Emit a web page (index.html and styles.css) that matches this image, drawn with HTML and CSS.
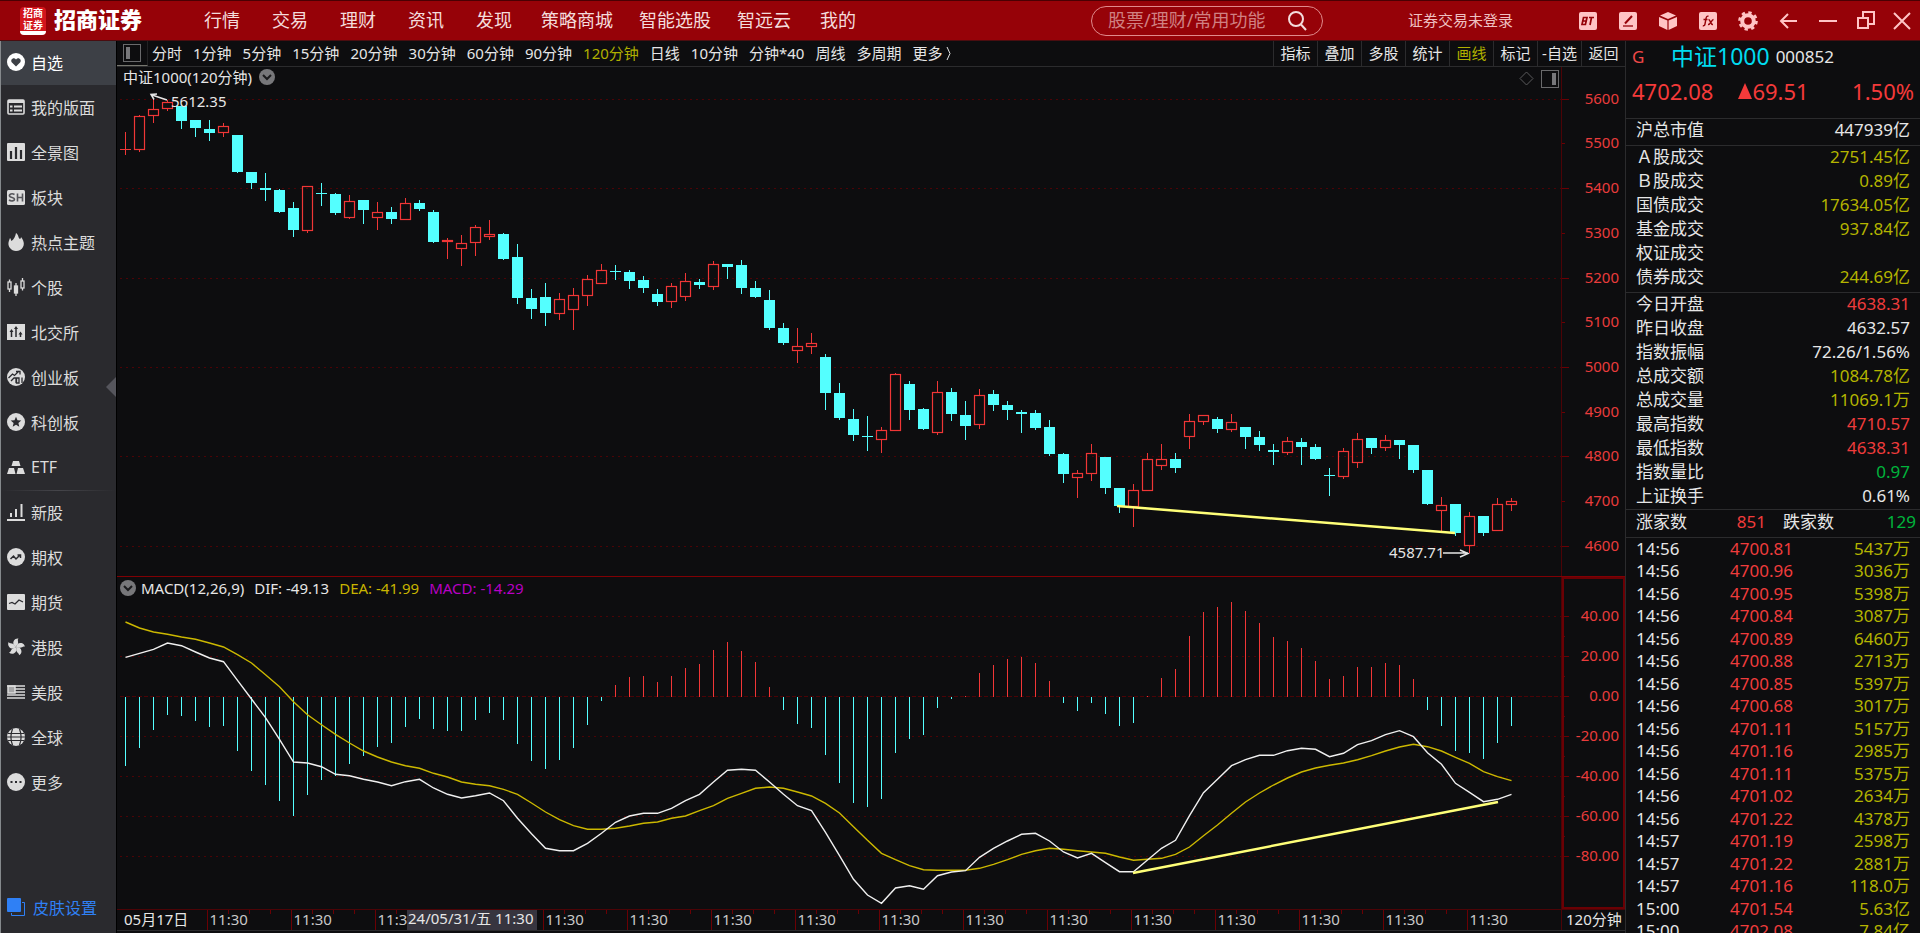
FILE: index.html
```html
<!DOCTYPE html>
<html lang="zh-CN">
<head>
<meta charset="utf-8">
<meta name="viewport" content="width=device-width, initial-scale=1">
<title>招商证券 - 中证1000</title>
<link rel="stylesheet" href="styles.css">
</head>
<body>
<div class="app">
  <header class="titlebar">
    <div class="brand">
      <span class="brand-mark"><span>招商</span><span>证券</span><i class="brand-foot"></i></span>
      <span class="brand-name">招商证券</span>
    </div>
    <nav class="nav">
      <a class="nav-link" href="#">行情</a>
      <a class="nav-link" href="#">交易</a>
      <a class="nav-link" href="#">理财</a>
      <a class="nav-link" href="#">资讯</a>
      <a class="nav-link" href="#">发现</a>
      <a class="nav-link nav-link--wide" href="#">策略商城</a>
      <a class="nav-link nav-link--wide" href="#">智能选股</a>
      <a class="nav-link nav-link--wide" href="#">智远云</a>
      <a class="nav-link" href="#">我的</a>
    </nav>
    <form class="search">
      <input class="search-input" type="text" aria-label="搜索" placeholder="股票/理财/常用功能">
      <button class="search-button" type="button" aria-label="搜索">
        <svg width="22" height="22" viewBox="0 0 22 22" fill="none" stroke="currentColor" stroke-width="2"><circle cx="10" cy="9" r="7"/><path d="M15 14.500l5 5.500"/></svg>
      </button>
    </form>
    <a class="login" href="#">证券交易未登录</a>
    <div class="tools">
      <button class="tool" type="button" aria-label="BT"><svg width="18" height="18" viewBox="0 0 18 18"><rect width="18" height="18" rx="2" fill="currentColor"/><path d="M4.500 5.500h3.500l-.8 3.500-.8 3.500H3zM3.800 9h3.400M10 5.500h5M12.500 5.500L11 13" fill="none" stroke="#960208" stroke-width="1.700"/></svg></button>
      <button class="tool" type="button" aria-label="编辑"><svg width="18" height="18" viewBox="0 0 18 18"><rect width="18" height="18" rx="2" fill="currentColor"/><path d="M4 14h10" stroke="#960208" stroke-width="1.300"/><path d="M6 11.500L13 4" stroke="#960208" stroke-width="2"/></svg></button>
      <button class="tool" type="button" aria-label="产品"><svg width="20" height="20" viewBox="0 0 20 20" fill="currentColor"><path d="M10 1l8 3.500-8 3.500-8-3.500zM1 6l8.400 3.500V19L1 15zM19 6l-8.400 3.500V19L19 15z"/></svg></button>
      <button class="tool" type="button" aria-label="公式"><svg width="18" height="18" viewBox="0 0 18 18"><rect width="18" height="18" rx="2" fill="currentColor"/><path d="M9.500 4.200C7.800 3.800 7.300 5 7 6.500L6 12c-.3 1.500-1 2-2.200 1.700M4.500 7.500h4M9.500 7.500c2 0 2 5.500 4.500 5M14.500 7.500c-2 0-3 5.500-5.500 5" fill="none" stroke="#960208" stroke-width="1.400"/></svg></button>
      <button class="tool" type="button" aria-label="设置"><svg width="20" height="20" viewBox="0 0 20 20" fill="none" stroke="currentColor"><circle cx="10" cy="10" r="5.800" stroke-width="4"/><circle cx="10" cy="10" r="8.500" stroke-width="2.600" stroke-dasharray="3.340 3.340"/></svg></button>
      <button class="tool" type="button" aria-label="后退"><svg width="18" height="18" viewBox="0 0 18 18" fill="none" stroke="currentColor" stroke-width="2"><path d="M18 9H2M9 2L2 9l7 7"/></svg></button>
      <button class="tool" type="button" aria-label="最小化"><svg width="18" height="18" viewBox="0 0 18 18" fill="none" stroke="currentColor" stroke-width="2"><path d="M0 9h18"/></svg></button>
      <button class="tool tool--narrow" type="button" aria-label="还原"><svg width="18" height="20" viewBox="0 0 18 20" fill="none" stroke="currentColor" stroke-width="2"><path d="M1 7h10v10H1zM6 7V1h11v12h-6"/></svg></button>
      <button class="tool tool--narrow" type="button" aria-label="关闭"><svg width="18" height="18" viewBox="0 0 18 18" fill="none" stroke="currentColor" stroke-width="2"><path d="M1 1l16 16M17 1L1 17"/></svg></button>
    </div>
  </header>

  <div class="workspace">
    <aside class="sidebar">
      <nav class="side-nav">
        <a class="side-link side-link--active" href="#"><svg class="side-icon" viewBox="0 0 18 18"><circle cx="9" cy="9" r="9" fill="currentColor"/><path d="M9 13.500L4.700 9.200C3 7 6.500 3.500 9 6.500c2.500-3 6 .5 4.300 2.700z" fill="#3d4046"/></svg>自选</a>
        <a class="side-link" href="#"><svg class="side-icon" viewBox="0 0 18 18"><rect x="1" y="2" width="16" height="14" rx="1" fill="none" stroke="currentColor" stroke-width="1.600"/><path d="M1 3.500h16" stroke="currentColor" stroke-width="3"/><path d="M3 8.500h2.500M7 8.500h8M3 12.500h2.500M7 12.500h8" stroke="currentColor" stroke-width="2"/></svg>我的版面</a>
        <a class="side-link" href="#"><svg class="side-icon" viewBox="0 0 18 18"><rect width="18" height="18" rx="1" fill="currentColor"/><path d="M4 16V8M9 16V4M14 16V7" stroke="#2a2a2e" stroke-width="2.200"/></svg>全景图</a>
        <a class="side-link" href="#"><svg class="side-icon" viewBox="0 0 18 18"><rect y="2" width="18" height="15" rx="1.500" fill="currentColor"/><path d="M7.500 6.500C5 5 2 6 2.500 8s5 1.200 5 3.200-3.500 2.300-5.500.8M10.500 5.500v8M15.500 5.500v8M10.500 9.500h5" fill="none" stroke="#55555a" stroke-width="1.600"/></svg>板块</a>
        <a class="side-link" href="#"><svg class="side-icon" viewBox="0 0 18 18"><path d="M9 0c3 2 2 5 4 6 1-.5 1-2 1-2 3 4 3.500 7 2 10-2 4.500-10 5.500-13 1C0 11 2 8 3 5c1 1 .8 2 1.500 3C7 6.500 8.500 3 9 0z" fill="currentColor"/></svg>热点主题</a>
        <a class="side-link" href="#"><svg class="side-icon" viewBox="0 0 18 18" fill="none" stroke="currentColor" stroke-width="1.300"><rect x="1" y="4" width="3" height="7"/><path d="M2.500 1.500V4M2.500 11v3M9 5v13"/><rect x="7.500" y="8" width="3" height="7" fill="currentColor"/><rect x="14" y="3" width="3" height="7"/><path d="M15.500 0v3M15.500 10v2.500"/></svg>个股</a>
        <a class="side-link" href="#"><svg class="side-icon" viewBox="0 0 18 18"><rect y="1" width="18" height="16" fill="currentColor"/><path d="M4.500 14V8M9 14V5M13.500 14v-4" stroke="#2a2a2e" stroke-width="1.500"/><path d="M2.500 9l2-3 2 3zM7 6l2-3 2 3zM11.500 11.500l2-3 2 3z" fill="#2a2a2e"/></svg>北交所</a>
        <a class="side-link" href="#"><svg class="side-icon" viewBox="0 0 18 18"><circle cx="9" cy="9" r="9" fill="currentColor"/><path d="M1.500 10l4-4 2 1.500L12 3M9 3.500h4v3M4 13l3-3h2v5M11 10h-1.500v5H12v-5zM15 9.500V15" fill="none" stroke="#2a2a2e" stroke-width="1.300"/></svg>创业板</a>
        <a class="side-link" href="#"><svg class="side-icon" viewBox="0 0 18 18"><circle cx="9" cy="9" r="9" fill="currentColor"/><path d="M9 3.800l1.500 3.500 3.800.3-2.900 2.400.9 3.700L9 11.700l-3.300 2 .9-3.700-2.900-2.400 3.800-.3z" fill="#2a2a2e"/></svg>科创板</a>
        <a class="side-link" href="#"><svg class="side-icon" viewBox="0 0 18 18" fill="currentColor"><path d="M6 3h6l1.500 5h-9zM2 10h5l1.500 6H0zM11 10h5l2 6H9.500z"/></svg>ETF</a>
        <a class="side-link side-link--ruled" href="#"><svg class="side-icon" viewBox="0 0 18 18" stroke="currentColor" stroke-width="2"><path d="M0 17h18M4 14v-4M9 14V6M14.500 14V1"/></svg>新股</a>
        <a class="side-link" href="#"><svg class="side-icon" viewBox="0 0 18 18"><circle cx="9" cy="9" r="9" fill="currentColor"/><path d="M3.500 11l3-3 2.500 3 4-4M10.500 7H13.500v3" fill="none" stroke="#2a2a2e" stroke-width="1.500"/></svg>期权</a>
        <a class="side-link" href="#"><svg class="side-icon" viewBox="0 0 18 18"><rect y="1" width="18" height="16" rx="1" fill="currentColor"/><path d="M2 10.500l3-1 3 1.500 4-4 4 2" fill="none" stroke="#2a2a2e" stroke-width="1.300"/></svg>期货</a>
        <a class="side-link" href="#"><svg class="side-icon" viewBox="0 0 18 18" fill="currentColor"><path id="petal" d="M9 9C6.500 7.500 5.500 5 7 2.500 7.800 1 9.500.2 11.500.5 10 1.800 11.500 3.500 11 5.500 10.600 7 9.200 7.300 9 9z"/><use href="#petal" transform="rotate(72 9 9)"/><use href="#petal" transform="rotate(144 9 9)"/><use href="#petal" transform="rotate(216 9 9)"/><use href="#petal" transform="rotate(288 9 9)"/></svg>港股</a>
        <a class="side-link" href="#"><svg class="side-icon" viewBox="0 0 18 18" stroke="currentColor" stroke-width="1.500"><path d="M0 3h18M8 6h10M8 9h10M0 12h18M0 15h18"/><rect x="1" y="3" width="7" height="7" fill="currentColor" fill-opacity=".7"/></svg>美股</a>
        <a class="side-link" href="#"><svg class="side-icon" viewBox="0 0 18 18"><circle cx="9" cy="9" r="9" fill="currentColor"/><path d="M5.500 1c-2 5-2 11 0 16M12.500 1c2 5 2 11 0 16M1 5.500h16M0 9h18M1 12.500h16" fill="none" stroke="#2a2a2e" stroke-width="1.200"/></svg>全球</a>
        <a class="side-link" href="#"><svg class="side-icon" viewBox="0 0 18 18"><circle cx="9" cy="9" r="9" fill="currentColor"/><path d="M3.500 8h2v2h-2zM8 8h2v2H8zM12.500 8h2v2h-2z" fill="#2a2a2e"/></svg>更多</a>
      </nav>
      <a class="skin-link" href="#"><svg class="side-icon" viewBox="0 0 18 18"><rect width="14" height="14" rx="1" fill="currentColor"/><path d="M15 4.500h2.500v13h-13V15" fill="none" stroke="currentColor"/></svg>皮肤设置</a>
      <button class="collapse" type="button" aria-label="收起"></button>
    </aside>

    <main class="main">
      <div class="toolbar">
        <button class="pane-toggle" type="button" aria-label="左侧栏"><i class="pane-box"></i></button>
        <div class="periods">
          <button type="button">分时</button><button type="button">1分钟</button><button type="button">5分钟</button><button type="button">15分钟</button><button type="button">20分钟</button><button type="button">30分钟</button><button type="button">60分钟</button><button type="button">90分钟</button><button class="is-on" type="button">120分钟</button><button type="button">日线</button><button type="button">10分钟</button><button type="button">分钟*40</button><button type="button">周线</button><button type="button">多周期</button><button type="button">更多<svg class="more-mark" width="12" height="15" viewBox="0 0 12 15" fill="none" stroke="currentColor"><path d="M5 1l3 6.500L5 14"/></svg></button>
        </div>
        <div class="actions">
          <button type="button">指标</button><button type="button">叠加</button><button type="button">多股</button><button type="button">统计</button><button class="is-on" type="button">画线</button><button type="button">标记</button><button type="button">-自选</button><button type="button">返回</button>
        </div>
      </div>
      <div class="chart">
        <svg id="plot" class="plot" viewBox="117 67 1508 866" role="img" aria-label="中证1000 120分钟 K线与MACD"></svg>
        <div class="legend legend--price">
          <span>中证1000(120分钟)</span>
          <button class="drop" type="button" aria-label="展开"><svg width="16" height="16" viewBox="0 0 16 16"><circle cx="8" cy="8" r="8" fill="#77777a"/><path d="M4 6l4 4 4-4" fill="none" stroke="#1a1a1c" stroke-width="2"/></svg></button>
        </div>
        <div class="legend legend--macd">
          <button class="drop" type="button" aria-label="展开"><svg width="16" height="16" viewBox="0 0 16 16"><circle cx="8" cy="8" r="8" fill="#77777a"/><path d="M4 6l4 4 4-4" fill="none" stroke="#1a1a1c" stroke-width="2"/></svg></button>
          <div class="legend-values"><span>MACD(12,26,9)</span><span>DIF: -49.13</span><span class="dea">DEA: -41.99</span><span class="macd">MACD: -14.29</span></div>
        </div>
      </div>
    </main>

    <section class="quote">
      <div class="quote-head">
        <div class="quote-title"><span class="flag">G</span><h1 class="quote-name">中证1000</h1><span class="quote-code">000852</span></div>
        <div class="quote-price"><span>4702.08</span><span class="delta"><svg width="14" height="18" viewBox="0 0 14 18"><path d="M7 1l7 16H0z" fill="currentColor"/></svg>69.51</span><span class="percent">1.50%</span></div>
      </div>
      <dl class="stats stats--cap"><dt>沪总市值</dt><dd>447939亿</dd></dl>
      <dl class="stats stats--turnover">
        <dt>Ａ股成交</dt><dd class="amount">2751.45亿</dd>
        <dt>Ｂ股成交</dt><dd class="amount">0.89亿</dd>
        <dt>国债成交</dt><dd class="amount">17634.05亿</dd>
        <dt>基金成交</dt><dd class="amount">937.84亿</dd>
        <dt>权证成交</dt><dd></dd>
        <dt>债券成交</dt><dd class="amount">244.69亿</dd>
      </dl>
      <dl class="stats">
        <dt>今日开盘</dt><dd class="up">4638.31</dd>
        <dt>昨日收盘</dt><dd>4632.57</dd>
        <dt>指数振幅</dt><dd>72.26/1.56%</dd>
        <dt>总成交额</dt><dd class="amount">1084.78亿</dd>
        <dt>总成交量</dt><dd class="amount">11069.1万</dd>
        <dt>最高指数</dt><dd class="up">4710.57</dd>
        <dt>最低指数</dt><dd class="up">4638.31</dd>
        <dt>指数量比</dt><dd class="down">0.97</dd>
        <dt>上证换手</dt><dd>0.61%</dd>
      </dl>
      <div class="breadth"><span>涨家数</span><span class="rise up">851</span><span class="fall-label">跌家数</span><span class="fall down">129</span></div>
      <table class="ticks">
        <tbody>
          <tr><td>14:56</td><td>4700.81</td><td>5437万</td></tr>
          <tr><td>14:56</td><td>4700.96</td><td>3036万</td></tr>
          <tr><td>14:56</td><td>4700.95</td><td>5398万</td></tr>
          <tr><td>14:56</td><td>4700.84</td><td>3087万</td></tr>
          <tr><td>14:56</td><td>4700.89</td><td>6460万</td></tr>
          <tr><td>14:56</td><td>4700.88</td><td>2713万</td></tr>
          <tr><td>14:56</td><td>4700.85</td><td>5397万</td></tr>
          <tr><td>14:56</td><td>4700.68</td><td>3017万</td></tr>
          <tr><td>14:56</td><td>4701.11</td><td>5157万</td></tr>
          <tr><td>14:56</td><td>4701.16</td><td>2985万</td></tr>
          <tr><td>14:56</td><td>4701.11</td><td>5375万</td></tr>
          <tr><td>14:56</td><td>4701.02</td><td>2634万</td></tr>
          <tr><td>14:56</td><td>4701.22</td><td>4378万</td></tr>
          <tr><td>14:57</td><td>4701.19</td><td>2598万</td></tr>
          <tr><td>14:57</td><td>4701.22</td><td>2881万</td></tr>
          <tr><td>14:57</td><td>4701.16</td><td>118.0万</td></tr>
          <tr><td>15:00</td><td>4701.54</td><td>5.63亿</td></tr>
          <tr><td>15:00</td><td>4702.08</td><td>7.84亿</td></tr>
        </tbody>
      </table>
    </section>
  </div>
</div>
<script src="chart.js"></script>
</body>
</html>
```

FILE: styles.css
```css
* { box-sizing: border-box; }

body {
  margin: 0;
  background: #0d0d0f;
  color: #e6e6e6;
  font-family: "Noto Sans", "Noto Sans CJK SC", sans-serif;
  font-size: 15px;
}

a { color: inherit; text-decoration: none; }

button {
  padding: 0;
  border: 0;
  background: none;
  color: inherit;
  font: inherit;
  cursor: pointer;
}

.app {
  display: flex;
  flex-direction: column;
  height: 100vh;
  overflow: hidden;
}

/* Title bar */
.titlebar {
  display: flex;
  flex: none;
  align-items: center;
  height: 41px;
  border-top: 1px solid #4a0003;
  border-bottom: 1px solid #4a0d10;
  background: #960208;
  color: #f4dcdc;
}

.brand {
  display: flex;
  align-items: center;
  gap: 8px;
  width: 188px;
  padding-left: 20px;
}

.brand-mark {
  display: flex;
  flex-direction: column;
  align-items: center;
  width: 26px;
  border-radius: 4px;
  background: #d3151c;
  color: #fff;
  font-size: 10px;
  font-weight: 700;
  line-height: 12px;
}

.brand-foot {
  width: 26px;
  height: 4px;
  border-radius: 0 0 4px 4px;
  background: #fff;
}

.brand-name {
  padding-bottom: 4px;
  color: #fff;
  font-size: 22px;
  font-weight: 900;
  line-height: 30px;
}

.nav { display: flex; flex: none; }
.nav-link { padding: 0 16px 2px; font-size: 18px; line-height: 36px; }
.nav-link--wide { padding: 0 13px 2px; }

.search {
  display: flex;
  align-items: center;
  width: 232px;
  height: 30px;
  margin: 0 85px 0 auto;
  border: 1px solid #e08a8c;
  border-radius: 15px;
}

.search-input {
  flex: 1;
  min-width: 0;
  padding: 0 0 2px 16px;
  border: 0;
  outline: 0;
  background: none;
  color: #d78f91;
  font: inherit;
  font-size: 18px;
}

.search-input::placeholder { color: #d08082; opacity: 1; }
.search-button { display: flex; width: 36px; }
.login { margin-right: 55px; padding-bottom: 2px; color: #eec0c1; }
.tools { display: flex; color: #ffc4c5; }
.tool { display: flex; align-items: center; justify-content: center; width: 40px; height: 38px; }
.tool--narrow { width: 36px; }

.workspace { display: flex; flex: 1; min-height: 0; }

/* Side navigation */
.sidebar {
  position: relative;
  display: flex;
  flex: none;
  flex-direction: column;
  justify-content: space-between;
  width: 117px;
  border-right: 1px solid #000;
  border-left: 1px solid #85898c;
  background: #2a2a2e;
  font-size: 16px;
}

.side-link, .skin-link {
  display: flex;
  align-items: center;
  gap: 6px;
  height: 45px;
  padding: 0 0 2px 6px;
  color: #dcdcdc;
  white-space: nowrap;
}

.side-link--active { height: 44px; background: #3d4046; color: #fff; }

.side-link--ruled {
  background: linear-gradient(90deg, transparent, #45454a, transparent) top / 100% 1px no-repeat;
}

.side-icon { flex: none; width: 18px; height: 18px; }
.skin-link { gap: 8px; height: 50px; color: #2f80f5; }

.collapse {
  position: absolute;
  top: 336px;
  right: 0;
  width: 10px;
  height: 20px;
  background: #55555c;
  clip-path: polygon(100% 0, 100% 100%, 0 50%);
}

/* Chart column */
.main { display: flex; flex: 1; flex-direction: column; min-width: 0; }

.toolbar {
  display: flex;
  flex: none;
  height: 26px;
  border-bottom: 1px solid #2b2b2d;
  white-space: nowrap;
}

.pane-toggle {
  display: flex;
  align-items: center;
  justify-content: center;
  width: 31px;
  border-right: 1px solid #222224;
  border-bottom: 1px solid #77776f;
}

.pane-box {
  width: 18px;
  height: 18px;
  border: 1px solid #6a6a6c;
  background: linear-gradient(#77777a, #77777a) 2px 2px / 4px 12px no-repeat;
}

.periods { display: flex; gap: 11px; padding: 0 0 2px 4px; }
.more-mark { vertical-align: -2px; }
.actions { display: flex; margin-left: auto; }
.actions button { width: 44px; padding-bottom: 2px; border-left: 1px solid #2b2b2d; }
.is-on { color: #b0b000; }

.chart { position: relative; }
.plot { display: block; width: 100%; height: auto; }
.plot text { font-size: 15px; fill: #e6e6e6; }
.plot .scale { fill: #e93c3c; text-anchor: end; }
.plot .clock { fill: #c8c8c8; }

.legend {
  position: absolute;
  display: flex;
  align-items: center;
  line-height: 20px;
}

.legend--price { top: 0; left: 6px; gap: 7px; }
.legend--macd { top: 59%; left: 3px; gap: 5px; }
.legend-values { display: flex; gap: 10px; }
.drop { display: flex; }
.legend .dea { color: #c8b400; }
.legend .macd { color: #b800c4; }

/* Quote panel */
.quote {
  flex: none;
  width: 295px;
  overflow: hidden;
  border-left: 1px solid #2b2b2d;
  font-size: 17px;
}

.quote-head { height: 77px; padding: 0 6px; }
.quote-title { display: flex; align-items: center; height: 30px; }
.flag { width: 39px; color: #f04848; }
.quote-name { margin: 0 6px 0 0; color: #00dcf0; font-size: 23px; font-weight: 400; line-height: 28px; }
.quote-price { display: flex; align-items: center; height: 40px; color: #f43a3a; font-size: 22px; }
.delta { display: flex; align-items: center; margin-left: 25px; }
.percent { margin-left: auto; }

.stats {
  display: grid;
  grid-template-columns: auto 1fr;
  grid-auto-rows: 24px;
  margin: 0;
  padding: 0 10px;
  border-top: 1px solid #2b2b2d;
  line-height: 22px;
}

.stats dd { margin: 0; text-align: right; }
.stats--cap { padding-bottom: 2px; }
.stats--turnover { padding-bottom: 2px; }
.up { color: #f03c3c; }
.down { color: #00b43c; }
.amount { color: #b4b400; }

.breadth {
  display: flex;
  height: 29px;
  padding: 0 4px 0 10px;
  border-top: 1px solid #2b2b2d;
  border-bottom: 1px solid #2b2b2d;
  line-height: 24px;
}

.rise { width: 79px; text-align: right; }
.fall-label { padding-left: 17px; }
.fall { margin-left: auto; }

.ticks {
  width: 100%;
  border-collapse: collapse;
  table-layout: fixed;
  line-height: 22px;
}

.ticks tr { height: 22px; }
.ticks tr:nth-child(even) { height: 23px; }
.ticks td { padding: 0; text-align: right; vertical-align: top; }
.ticks td:first-child { width: 64px; padding-left: 10px; text-align: left; }
.ticks td:nth-child(2) { width: 103px; color: #f03c3c; }
.ticks td:last-child { padding-right: 10px; color: #b4b400; }
```

FILE: chart.js
```js
// Candles: high, body top, body bottom, low (plot units); r = rising, c = falling.
const candles = `
132 149 149 155 r|115 116 150 152 r|98 109 116 123 r|100 102 109 111 r|106 106 121 129 c
120 120 128 137 c|120 129 133 141 c|123 126 133 137 r|135 135 172 173 c|172 172 183 189 c
173 188 190 201 c|189 190 212 213 c|202 208 230 237 c|186 186 231 233 r|183 193 194 206 c
193 194 213 215 c|195 201 218 219 r|200 200 210 224 c|202 212 218 230 r|207 212 219 224 c
198 203 220 220 r|200 203 209 211 c|210 212 242 243 c|238 240 242 259 r|235 243 249 266 r
225 227 243 256 r|220 234 237 240 r|233 234 259 260 c|244 257 298 304 c|289 298 309 319 c
283 297 313 326 c|293 299 314 320 r|288 295 310 330 r|275 279 296 306 r|264 270 284 284 r
265 271 272 280 c|270 272 281 289 c|276 280 288 293 c|289 294 302 306 c|283 286 302 308 r
273 281 297 301 r|279 282 285 289 c|261 264 287 290 r|264 264 267 279 c|260 265 288 294 c
281 288 297 298 c|290 300 328 330 c|323 328 343 345 c|328 346 351 363 r|333 343 347 354 r
354 357 393 410 c|383 393 418 420 c|409 419 435 441 c|416 436 437 451 c|427 430 440 453 r
373 374 431 431 r|381 384 410 420 c|408 409 429 430 c|381 392 433 435 r|388 392 414 421 c
401 415 426 440 c|389 395 425 429 r|390 394 405 411 c|401 405 410 420 c|410 412 414 433 c
410 413 428 430 c|420 427 454 456 c|453 454 474 483 c|470 473 478 498 r|444 453 474 481 r
457 457 488 494 c|488 488 506 513 c|484 490 507 527 r|453 459 491 491 r|444 459 466 470 r
453 459 468 473 c|414 421 437 449 r|415 415 422 425 r|417 419 429 433 c|414 422 430 432 r
427 427 437 449 c|431 437 445 451 c|444 450 452 465 c|437 441 453 455 r|438 442 447 465 c
444 447 459 460 c|468 475 476 496 c|448 451 477 479 r|433 439 463 468 r|438 438 448 454 c
435 440 448 451 r|440 440 445 459 c|445 445 470 473 c|470 470 504 505 c|497 505 511 532 r
504 504 533 536 c|512 516 546 553 r|516 516 533 536 c|498 504 531 531 r|498 501 505 511 r
`.trim().split(/[|\n]/).map(s => s.trim().split(' '));

// Histogram heights above (+) or below (-) the zero line.
const histogram = [
  -69, -51, -33, -18, -19, -24, -30, -29, -54, -74, -88, -104, -119, -98, -83, -79, -67, -59, -50, -46,
  -30, -22, -32, -34, -34, -23, -16, -23, -47, -64, -72, -63, -51, -28, -4, 12, 20, 21, 15, 21,
  29, 33, 47, 55, 46, 35, 10, -13, -27, -31, -58, -86, -106, -110, -102, -56, -42, -38, -11, -2,
  1, 24, 32, 38, 40, 34, 16, -6, -14, -6, -17, -29, -26, 1, 19, 28, 61, 85, 90, 95,
  86, 74, 60, 56, 49, 36, 18, 21, 30, 30, 34, 32, 18, -13, -29, -54, -56, -62, -46, -29
];

// Indicator lines, in thirds of a plot unit below the top of the MACD area.
const dif = [
  262, 250, 238, 219, 227, 246, 264, 275, 331, 387, 443, 508, 576, 579, 590, 613, 617, 628, 636, 647,
  635, 628, 654, 673, 684, 677, 669, 692, 745, 791, 835, 842, 842, 820, 790, 757, 738, 730, 730, 715,
  692, 673, 636, 601, 598, 601, 636, 673, 707, 722, 787, 857, 928, 975, 1000, 954, 947, 958, 917, 906,
  902, 862, 835, 813, 793, 790, 813, 846, 864, 850, 878, 905, 905, 870, 835, 811, 737, 668, 628, 587,
  569, 556, 556, 542, 535, 538, 560, 550, 524, 512, 494, 482, 500, 548, 583, 640, 667, 695, 688, 673
];
const dea = [
  156, 174, 186, 193, 201, 208, 219, 231, 254, 279, 314, 350, 395, 434, 464, 493, 519, 543, 561, 576,
  587, 595, 610, 621, 636, 643, 647, 658, 673, 699, 726, 749, 767, 778, 778, 775, 768, 760, 756, 745,
  738, 722, 707, 685, 670, 655, 651, 655, 666, 678, 700, 729, 770, 811, 850, 869, 887, 899, 901, 901,
  901, 895, 883, 869, 853, 842, 835, 838, 842, 846, 850, 861, 871, 868, 865, 853, 831, 797, 765, 730,
  696, 669, 645, 624, 606, 594, 586, 579, 569, 557, 543, 531, 523, 530, 543, 562, 580, 605, 620, 632
];

const RISE = '#f03636';
const FALL = '#54ffff';
const GRID = '#4c0306';
const FRAME = '#6a0004';
const column = i => 125 + 14 * i;
const out = [];

const line = (x1, y1, x2, y2, color, width = 1, extra = '') =>
  out.push(`<line x1="${x1}" y1="${y1}" x2="${x2}" y2="${y2}" stroke="${color}" stroke-width="${width}" ${extra}/>`);
const box = (x, y, w, h, fill) =>
  out.push(`<rect x="${x}" y="${y}" width="${w}" height="${h}" fill="${fill}"/>`);
const label = (x, y, text, cls = '') =>
  out.push(`<text x="${x}" y="${y}" class="${cls}">${text}</text>`);

// Price scale
for (let k = 0; k <= 10; k++) {
  const y = Math.round(98.6 + 44.73 * k) + 0.5;
  if (k % 2 === 0) line(120, y, 1561, y, GRID, 1, 'stroke-dasharray="2 4"');
  line(1561, y, k % 2 === 0 ? 1569 : 1565, y, FRAME);
  label(1619, y + 4.5, 5600 - 100 * k, 'scale');
}

// MACD scale
for (let k = 0; k <= 12; k++) {
  const y = 616.5 + 20 * k;
  if (k % 2 === 0) {
    line(120, y, 1561, y, GRID, 1, k === 4 ? 'stroke-dasharray="4 2"' : 'stroke-dasharray="2 4"');
    label(1619, y + 4.5, (40 - 10 * k).toFixed(2), 'scale');
  }
  line(1562, y, k % 2 === 0 ? 1569 : 1565, y, FRAME);
}

// Frames
line(1561.5, 67, 1561.5, 930, '#4c0306');
line(117, 576.5, 1625, 576.5, '#800004');
line(117, 909.5, 1625, 909.5, '#4c0306');
out.push(`<rect x="1563" y="578" width="61" height="330" fill="none" stroke="${FRAME}" stroke-width="2"/>`);
line(117, 930.5, 1625, 930.5, '#2b2b2d');

// Candles
candles.forEach(([high, top, bottom, low, kind], i) => {
  const [h, t, b, l] = [high, top, bottom, low].map(Number);
  const x = column(i);
  const color = kind === 'r' ? RISE : FALL;
  box(x, h, 1, Math.max(t - h, 0), color);
  box(x, b, 1, Math.max(l - b, 0), color);
  if (kind === 'c' || b - t < 2) box(x - 5, t, 11, Math.max(b - t, 1), color);
  else out.push(`<rect x="${x - 4.5}" y="${t + 0.5}" width="10" height="${b - t - 1}" fill="none" stroke="${color}" stroke-width="1.200"/>`);
});

// Histogram
histogram.forEach((v, i) => {
  box(column(i), v > 0 ? 697 - v : 697, 1, Math.abs(v), v > 0 ? RISE : FALL);
});

// Indicator lines
const trace = (levels, color) => {
  const points = levels.map((v, i) => `${column(i) + 0.5},${(570 + v / 3).toFixed(1)}`).join(' ');
  out.push(`<polyline points="${points}" fill="none" stroke="${color}" stroke-width="1.400"/>`);
};
trace(dea, '#ccb800');
trace(dif, '#f0f0f0');

// Trend lines drawn by the user
line(1117, 506, 1455, 533, '#ffff78', 2.5);
line(1133, 873, 1498, 802, '#ffff78', 2.5);

// Extreme price marks
label(171, 107, '5612.35');
out.push('<path d="M167 100L152 95M157 94L151 94.500L154 99.500" fill="none" stroke="#e6e6e6" stroke-width="1.500"/>');
label(1389, 558, '4587.71');
out.push('<path d="M1443 553H1468M1460 550L1468 553.500L1460 557" fill="none" stroke="#e6e6e6" stroke-width="1.500"/>');

// Corner marks
out.push('<path d="M1526.500 72L1533 78.500L1526.500 85L1520 78.500Z" fill="none" stroke="#5a5a5c"/>');
out.push('<rect x="1541.500" y="70.500" width="17" height="17" fill="none" stroke="#6a6a6c"/>');
box(1552, 73, 4, 12, '#77777a');

// Time scale; the fourth mark lies wholly under the cursor's date.
for (let k = 0; k <= 60; k++) {
  const x = 207.5 + 21 * k;
  if (k % 4 === 0) {
    line(x, 910, x, 930, FRAME);
    if (k !== 12) label(x + 2, 925, '11:30', 'clock');
  } else line(x, 910, x, 914, FRAME);
}
label(124, 925, '05月17日');
box(407, 910, 130, 20, '#37353f');
label(408, 924, '24/05/31/五 11:30');
label(1566, 925, '120分钟');

document.getElementById('plot').innerHTML = out.join('');
```
